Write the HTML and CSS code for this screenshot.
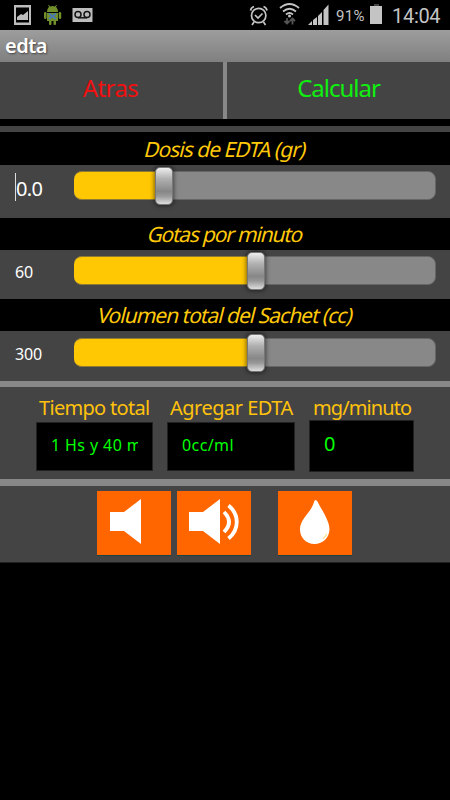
FILE: index.html
```html
<!DOCTYPE html>
<html lang="es">
<head>
<meta charset="utf-8">
<title>edta</title>
<link rel="stylesheet" href="styles.css">
</head>
<body>
<header class="status">
  <svg class="status-left" width="100" height="30" viewBox="0 0 100 30">
    <path fill="#bdbdbd" fill-rule="evenodd" d="M14 5h17v20H14zM16 7.500v15h13v-15z"/>
    <path fill="#bdbdbd" d="M17 20v-3l4-3 2 1 5-4v9z"/>
    <g fill="#718f2b">
      <path d="M47 12q0-6 5.500-6t5.500 6zM47 13h11v8H47z"/>
      <rect x="44" y="12" width="2.500" height="7" rx="1.200"/><rect x="58.700" y="12" width="2.500" height="7" rx="1.200"/>
      <rect x="49" y="20" width="2.500" height="5" rx="1"/><rect x="53.500" y="20" width="2.500" height="5" rx="1"/>
      <path stroke="#718f2b" d="M48.500 5l1.500 2.500M56.500 5L55 7.500"/>
    </g>
    <path fill="none" stroke="#4a79b8" stroke-width="2" d="M49 13.500l7 5.500M56 13.500L49 19"/>
    <path fill="#bdbdbd" d="M72.500 8h20v14h-20z"/>
    <g fill="none" stroke="#141414" stroke-width="1.500"><circle cx="78" cy="14.500" r="3"/><circle cx="87" cy="14.500" r="3"/><path d="M78 17.800h9"/></g>
  </svg>
  <div class="status-right">
    <svg width="86" height="30" viewBox="248 0 86 30">
      <g fill="none" stroke="#c4c4c4" stroke-width="1.700">
        <circle cx="258.700" cy="15.500" r="7.200"/><path d="M255 15l3 3 4.500-4.500M250.500 10.500q.5-3 3.500-4M267 10.500q-.5-3-3.500-4M254 22l-2 3M263.500 22l2 3"/>
        <path d="M280 8q9.500-8 19 0M283 11.500q6.500-5.500 13 0M286 14.500q3.500-3 7 0"/>
      </g>
      <circle cx="289.500" cy="16" r="1.500" fill="#c4c4c4"/>
      <path fill="none" stroke="#555" stroke-width="1.800" d="M287 18v5.500M284.500 21l2.500 2.500 2.500-2.500M292.500 24.500V19M290 21l2.500-2.500 2.500 2.500"/>
      <path fill="#c4c4c4" d="M308 25l4-4v4zM313 25v-5l4-3v8zM318 25v-9l4-4v13zM323.500 25V10l5-5.500V25z"/>
    </svg>
    <span class="percent">91%</span>
    <svg class="battery" width="14" height="30" viewBox="0 0 14 30"><path fill="#444" d="M5 4h5v2H5z"/><path fill="#c4c4c4" d="M1 6h12v18H1z"/></svg>
    <span class="clock">14:04</span>
  </div>
</header>
<h1 class="title"><span>edta</span></h1>
<nav class="actions">
  <button class="back"><span>Atras</span></button>
  <button class="calc"><span>Calcular</span></button>
</nav>
<div class="strip"></div>
<main>
  <section class="field dose">
    <h2><span>Dosis de EDTA (gr)</span></h2>
    <div class="row"><span class="value focused">0.0</span><div class="slider low"><i class="fill"></i><i class="thumb"></i></div></div>
  </section>
  <section class="field drops">
    <h2><span>Gotas por minuto</span></h2>
    <div class="row"><span class="value">60</span><div class="slider"><i class="fill"></i><i class="thumb"></i></div></div>
  </section>
  <section class="field volume">
    <h2><span>Volumen total del Sachet (cc)</span></h2>
    <div class="row"><span class="value">300</span><div class="slider"><i class="fill"></i><i class="thumb"></i></div></div>
  </section>
  <section class="results">
    <div class="result time"><h3>Tiempo total</h3><div class="box"><span>1 Hs y 40 m</span></div></div>
    <div class="result add"><h3>Agregar EDTA</h3><div class="box"><span>0cc/ml</span></div></div>
    <div class="result rate"><h3>mg/minuto</h3><div class="box"><span>0</span></div></div>
  </section>
  <section class="sounds">
    <button class="tile"><svg width="74" height="64" viewBox="0 0 74 64"><path fill="#fff" d="M13 21h14L44 8v45L27 40H13z"/></svg></button>
    <button class="tile"><svg width="74" height="64" viewBox="0 0 74 64"><path fill="#fff" d="M12 21h14L43 8v45L26 40H12z"/><path fill="none" stroke="#fff" stroke-width="3.800" d="M47 21q10 10 0 20M51.500 14.500c11 9 11 24 0 33"/></svg></button>
    <button class="tile drop"><svg width="74" height="64" viewBox="0 0 74 64"><path fill="#fff" d="M37.500 9c1 0 2 1.500 3 3.500 4 7.500 11 18 11 25.500 0 8.500-6.500 15-15 15S22 46.500 22 38.500c0-11 11-16.500 14-27.500q.5-2 1.500-2z"/><path stroke="#ffe49a" stroke-width="1.300" d="M45 48l4-5"/></svg></button>
  </section>
</main>
</body>
</html>
```

FILE: styles.css
```css
* { box-sizing: border-box; }
body { margin: 0; width: 450px; height: 800px; overflow: hidden; background: #000; color: #fff; font-family: "Noto Sans", sans-serif; }
h1, h2, h3 { margin: 0; font-weight: 400; }
button { border: 0; padding: 0; font: inherit; }
svg { display: block; flex: none; }
.status { height: 30px; display: flex; justify-content: space-between; color: #c4c4c4; font-family: Roboto, sans-serif; }
.status-right { display: flex; width: 202px; white-space: nowrap; }
.percent { width: 34px; padding-left: 2px; font-size: 15px; line-height: 32px; letter-spacing: .3px; }
.battery { margin-left: 1px; }
.clock { margin-left: 9px; font-size: 20px; line-height: 32px; letter-spacing: -.3px; }
.title { height: 32px; padding-left: 5px; background: linear-gradient(#9d9d9d, #808080); font-size: 20px; line-height: 32px; font-weight: 600; letter-spacing: -.5px; text-shadow: 1px 1px 2px #444; }
.actions { height: 57px; display: grid; grid-template-columns: 223px 223px; gap: 4px; background: #888; }
.actions button { background: #444; font-size: 24px; line-height: 51px; padding-bottom: 6px; }
.actions .back { padding-right: 2px; color: #f01010; letter-spacing: -.6px; }
.actions .calc { color: #10f010; letter-spacing: -1px; }
.strip { height: 13px; border-top: 7px solid #000; background: #444; }
.field { background: #444; }
.field h2 { height: 33px; background: #000; color: #ffc90a; font-size: 21px; line-height: 34px; text-align: center; white-space: nowrap; }
.field h2 span { display: inline-block; transform: skewX(-14deg); }
.dose { height: 86px; }
.drops { height: 81px; }
.volume { height: 82px; }
.drops h2, .volume h2 { height: 32px; line-height: 33px; }
.dose h2 { letter-spacing: -1px; }
.drops h2 { letter-spacing: -1.2px; }
.volume h2 { letter-spacing: -1px; }
.row { display: flex; padding: 6px 14px 0 15px; }
.volume .row { padding-top: 7px; }
.value { width: 59px; flex: none; font-size: 16px; line-height: 32px; letter-spacing: -.1px; }
.value.focused { padding-left: 1px; font-size: 20px; line-height: 35px; letter-spacing: -.7px; background: linear-gradient(#ddd, #ddd) 0 2px / 1px 28px no-repeat; }
.slider { position: relative; flex: 1; height: 29px; border-radius: 8px; background: #888; border: 1px solid #666; }
.fill { position: absolute; inset: -1px auto -1px -1px; width: 183px; background: #ffc803; border: solid #8e7a32; border-width: 1px 0 1px 0; border-radius: 8px 0 0 8px; }
.thumb { position: absolute; left: 172px; top: -5px; width: 18px; height: 38px; border-radius: 5px; border: 1px solid #777; background: linear-gradient(#eee, #b0b0b0 30%, #878787 65%, #999 78%, #ddd); box-shadow: 0 0 4px 1px rgba(0,0,0,.5); }
.low .fill { width: 90px; }
.low .thumb { left: 80px; }
.results { height: 105px; padding: 5px 36px 0; display: flex; background: #444; border: solid #888; border-width: 6px 0 7px; }
.result h3 { height: 30px; color: #ffc20c; font-size: 20px; line-height: 32px; white-space: nowrap; padding-left: 3px; }
.time { width: 117px; margin-right: 14px; }
.add { width: 128px; margin-right: 14px; }
.rate { width: 105px; }
.time h3 { letter-spacing: -.7px; }
.add h3 { letter-spacing: -.5px; }
.rate h3 { height: 28px; padding-left: 4px; letter-spacing: -.9px; }
.box { height: 49px; padding: 0 15px; border: 1px solid #222; background: #000; color: #0f0; font-size: 16px; line-height: 44px; }
.box span { display: block; overflow: hidden; white-space: nowrap; }
.time .box { padding-left: 14px; }
.time .box span { width: 87px; letter-spacing: .4px; }
.add .box { padding-left: 14px; letter-spacing: .4px; }
.rate .box { padding-left: 14px; height: 52px; font-size: 20px; line-height: 46px; }
.sounds { height: 77px; padding: 5px 0 0 97px; display: flex; gap: 6px; background: #444; border-bottom: 1px solid #222; }
.tile { width: 74px; height: 65px; background: #f60; border: 0 solid #174345; border-width: 0 0 1px; }
.drop { margin-left: 21px; }
```
